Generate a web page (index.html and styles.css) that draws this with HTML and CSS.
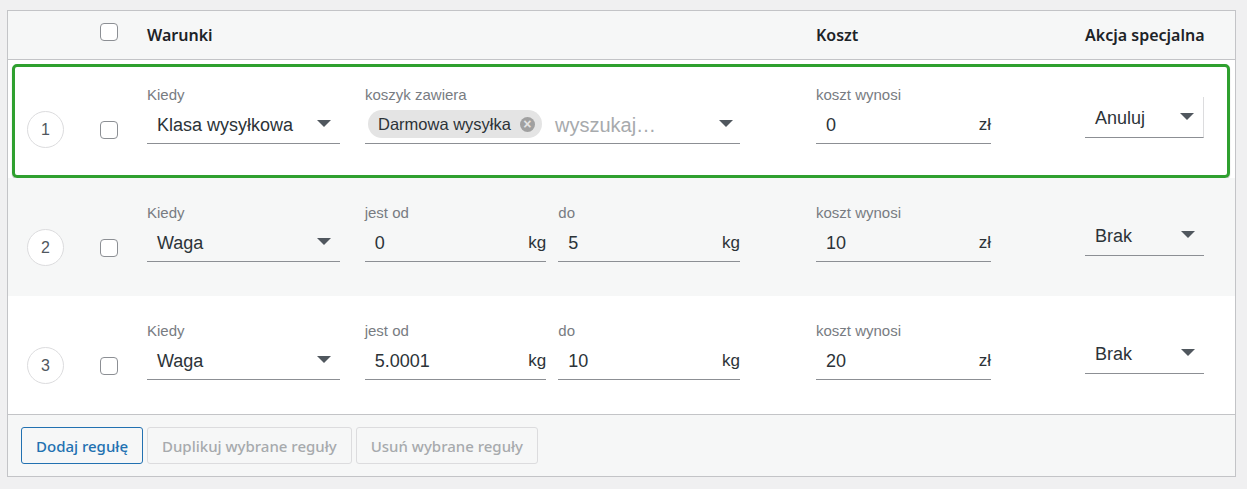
FILE: index.html
```html
<!DOCTYPE html>
<html lang="pl">
<head>
    <meta charset="UTF-8">
    <meta name="viewport" content="width=device-width, initial-scale=1.0">
    <title>Reguły kosztów wysyłki</title>
    <link rel="stylesheet" href="styles.css">
</head>
<body>
<div class="rules">
    <div class="rules-head">
        <span class="c-num"></span>
        <span class="c-check"><span class="checkbox"></span></span>
        <span class="c-cond">Warunki</span>
        <span class="c-cost">Koszt</span>
        <span class="c-action">Akcja specjalna</span>
    </div>

    <!-- rule 1: shipping class -->
    <div class="rule rule-active">
        <span class="c-num"><span class="num">1</span></span>
        <span class="c-check"><span class="checkbox"></span></span>
        <div class="c-cond">
            <div class="field f-when">
                <label>Kiedy</label>
                <div class="control"><span class="value">Klasa wysyłkowa</span><span class="caret"></span></div>
            </div>
            <div class="field f-wide">
                <label>koszyk zawiera</label>
                <div class="control multi">
                    <span class="chip">Darmowa wysyłka<span class="chip-x">&times;</span></span>
                    <span class="placeholder">wyszukaj…</span>
                    <span class="caret"></span>
                </div>
            </div>
        </div>
        <div class="c-cost field">
            <label>koszt wynosi</label>
            <div class="control"><span class="value">0</span><span class="unit">zł</span></div>
        </div>
        <div class="c-action">
            <div class="control action open"><span class="value">Anuluj</span><span class="caret"></span></div>
        </div>
    </div>

    <!-- rule 2: weight 0 - 5 -->
    <div class="rule rule-alt">
        <span class="c-num"><span class="num">2</span></span>
        <span class="c-check"><span class="checkbox"></span></span>
        <div class="c-cond">
            <div class="field f-when">
                <label>Kiedy</label>
                <div class="control"><span class="value">Waga</span><span class="caret"></span></div>
            </div>
            <div class="field f-half">
                <label>jest od</label>
                <div class="control"><span class="value">0</span><span class="unit">kg</span></div>
            </div>
            <div class="field f-half">
                <label>do</label>
                <div class="control"><span class="value">5</span><span class="unit">kg</span></div>
            </div>
        </div>
        <div class="c-cost field">
            <label>koszt wynosi</label>
            <div class="control"><span class="value">10</span><span class="unit">zł</span></div>
        </div>
        <div class="c-action">
            <div class="control action"><span class="value">Brak</span><span class="caret"></span></div>
        </div>
    </div>

    <!-- rule 3: weight 5.0001 - 10 -->
    <div class="rule">
        <span class="c-num"><span class="num">3</span></span>
        <span class="c-check"><span class="checkbox"></span></span>
        <div class="c-cond">
            <div class="field f-when">
                <label>Kiedy</label>
                <div class="control"><span class="value">Waga</span><span class="caret"></span></div>
            </div>
            <div class="field f-half">
                <label>jest od</label>
                <div class="control"><span class="value">5.0001</span><span class="unit">kg</span></div>
            </div>
            <div class="field f-half">
                <label>do</label>
                <div class="control"><span class="value">10</span><span class="unit">kg</span></div>
            </div>
        </div>
        <div class="c-cost field">
            <label>koszt wynosi</label>
            <div class="control"><span class="value">20</span><span class="unit">zł</span></div>
        </div>
        <div class="c-action">
            <div class="control action"><span class="value">Brak</span><span class="caret"></span></div>
        </div>
    </div>

    <div class="rules-foot">
        <button class="btn">Dodaj regułę</button>
        <button class="btn" disabled>Duplikuj wybrane reguły</button>
        <button class="btn" disabled>Usuń wybrane reguły</button>
    </div>
</div>
</body>
</html>
```

FILE: styles.css
```css
body {
    margin: 10px 11px 0 7px;
    background-color: #f0f0f1;
    font-family: 'Liberation Sans', Arial, sans-serif;
    color: #2c3338;
}
.rules {
    border: 1px solid #c3c4c7;
    background: #fff;
}

/* column widths shared by head and rows */
.c-num { margin-left: 19px; width: 37px; flex: none; }
.c-check { margin-left: 36px; width: 18px; flex: none; }
.c-cond { margin-left: 29px; width: 593px; flex: none; display: flex; }
.c-cost { margin-left: 76px; width: 175px; flex: none; }
.c-action { margin-left: 94px; width: 119px; flex: none; white-space: nowrap; }

.rules-head {
    display: flex;
    align-items: center;
    height: 48px;
    background: #f6f7f7;
    border-bottom: 1px solid #c3c4c7;
    font-family: 'Noto Sans', 'Open Sans', sans-serif;
    font-weight: 600;
    font-size: 16px;
    color: #1d2327;
}
.rules-head .c-check { height: 18px; margin-bottom: 6px; }

.checkbox {
    display: block;
    width: 18px;
    height: 18px;
    box-sizing: border-box;
    border: 1px solid #8c8f94;
    border-radius: 4px;
    background: #fff;
}

.rule {
    position: relative;
    display: flex;
    align-items: flex-end;
    height: 118px;
    box-sizing: border-box;
    padding-bottom: 34px;
    background: #fff;
}
.rule-alt { background: #f6f7f7; }
/* green frame around the rule being edited */
.rule-active::after {
    content: "";
    position: absolute;
    top: 4px;
    left: 4px;
    right: 5px;
    bottom: 0;
    border: 3px solid #2fa02f;
    border-radius: 5px;
    box-shadow: 0 1px 1px rgba(0, 0, 0, 0.35);
    pointer-events: none;
}

.num {
    display: flex;
    align-items: center;
    justify-content: center;
    width: 37px;
    height: 37px;
    box-sizing: border-box;
    border: 1px solid #dcdcde;
    border-radius: 50%;
    font-size: 16px;
    color: #50575e;
    background: #fff;
}
.rule .c-num { margin-bottom: -4px; }
.rule .c-check { margin-bottom: 5px; }
.rule .c-action { margin-bottom: 6px; }

.field { display: flex; flex-direction: column; }
.field label {
    font-size: 15px;
    line-height: 17px;
    color: #787c82;
}
.f-when { width: 193px; margin-right: 25px; }
.f-wide { width: 375px; }
.f-half { width: 182px; }
.f-half + .f-half { margin-left: 12px; }

.control {
    display: flex;
    align-items: flex-end;
    height: 41px;
    box-sizing: border-box;
    padding: 0 0 8px 10px;
    border-bottom: 1px solid #8c8f94;
    font-size: 18px;
    line-height: 20px;
    color: #2c3338;
}
.control .value { flex: 1; white-space: nowrap; }
.unit { font-size: 17px; }
.caret {
    width: 0;
    height: 0;
    margin: 0 9px 8px 0;
    border-left: 7px solid transparent;
    border-right: 7px solid transparent;
    border-top: 7px solid #50575e;
}
.action { padding-bottom: 9px; }
.action.open { border-right: 1px solid #dcdcde; }

.multi { padding-left: 3px; padding-bottom: 5px; }
.chip {
    display: flex;
    align-items: center;
    height: 28px;
    padding: 0 7px 0 10px;
    border-radius: 14px;
    background: #e4e4e4;
    font-size: 16.5px;
    color: #2c3338;
    white-space: nowrap;
}
.chip-x {
    display: flex;
    align-items: center;
    justify-content: center;
    width: 15px;
    height: 15px;
    margin-left: 9px;
    border-radius: 50%;
    background: #a0a0a0;
    color: #e4e4e4;
    font-size: 14px;
    line-height: 1;
    font-weight: bold;
}
.placeholder {
    flex: 1;
    margin: 0 0 3px 13px;
    color: #a7aaad;
    font-size: 20px;
    white-space: nowrap;
}
.multi .caret { margin-bottom: 11px; margin-right: 7px; }

.rules-foot {
    display: flex;
    gap: 4px;
    padding: 12px 13px 12px 13px;
    border-top: 1px solid #c3c4c7;
    background: #f6f7f7;
}
.btn {
    height: 37px;
    padding: 0 14px;
    border: 1px solid #2271b1;
    border-radius: 3px;
    background: #f6f7f7;
    color: #2271b1;
    font-family: 'Noto Sans', 'Open Sans', sans-serif;
    font-size: 15px;
    font-weight: 500;
    cursor: pointer;
}
.btn:disabled {
    border-color: #dcdcde;
    color: #a7aaad;
    cursor: default;
}
```
